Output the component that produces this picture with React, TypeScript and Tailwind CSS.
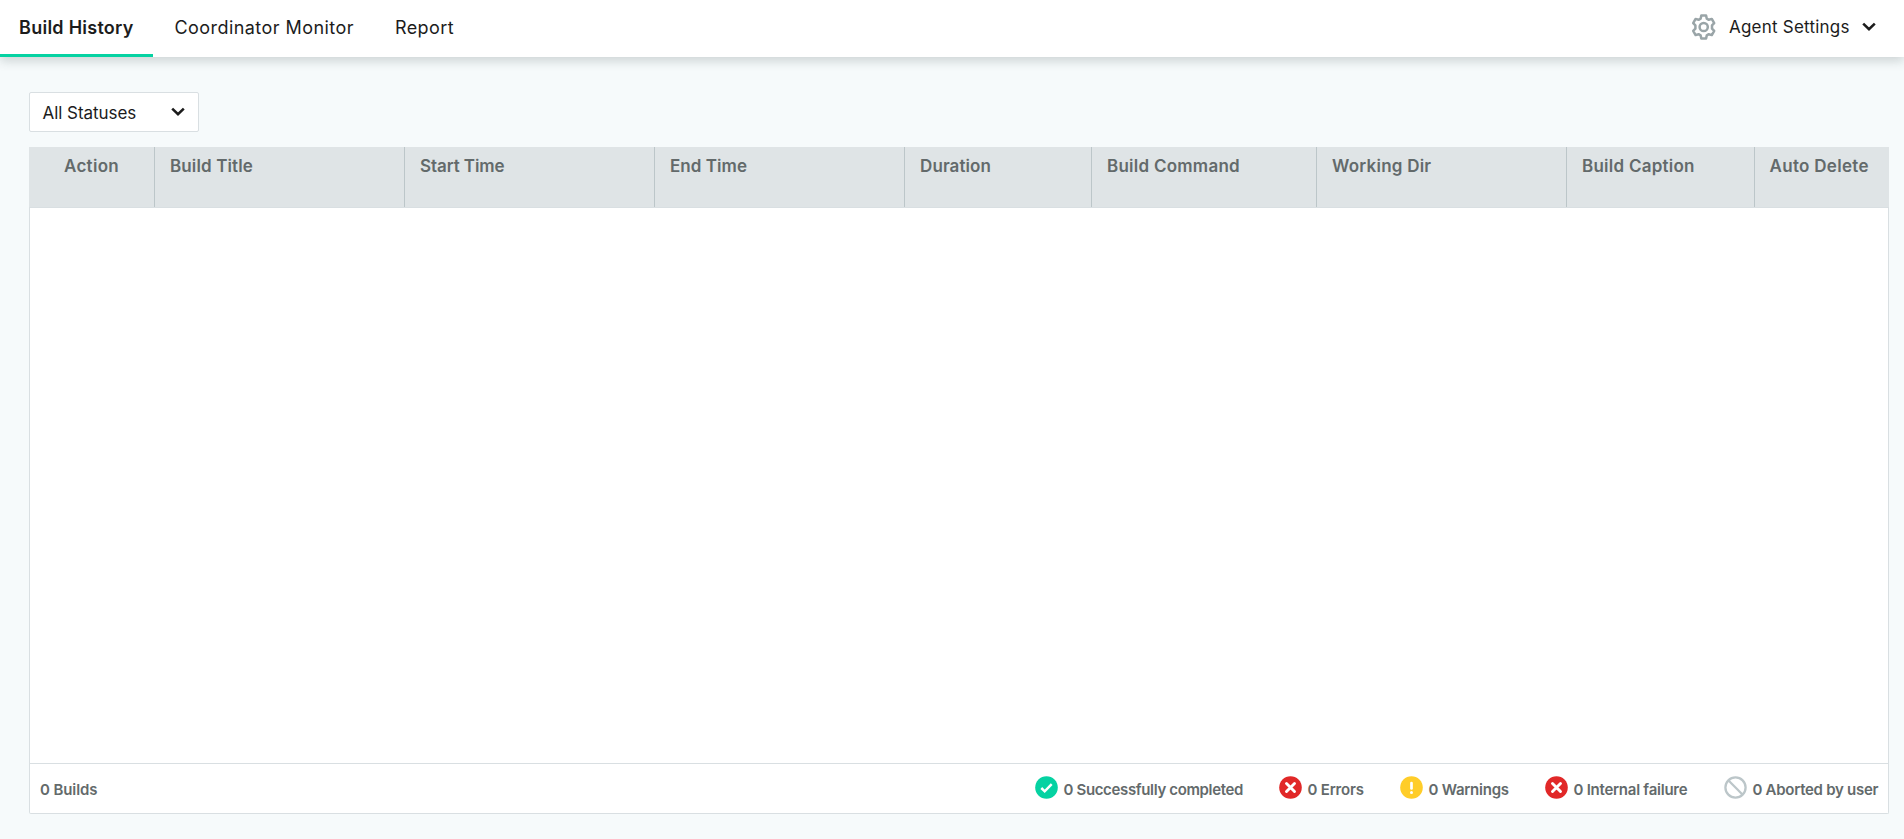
type Item = { label: string; cls: string };

const columns: Item[] = [
  { label: 'Action', cls: 'w-[126px] pl-[35px] tracking-[0.3px]' },
  { label: 'Build Title', cls: 'w-[250px] pl-[15px] tracking-[0.12px]' },
  { label: 'Start Time', cls: 'w-[250px] pl-[15px] tracking-[-0.08px]' },
  { label: 'End Time', cls: 'w-[250px] pl-[15px] tracking-[0.05px]' },
  { label: 'Duration', cls: 'w-[187px] pl-[15px] tracking-[0.1px]' },
  { label: 'Build Command', cls: 'w-[225px] pl-[15px] tracking-[0.25px]' },
  { label: 'Working Dir', cls: 'w-[250px] pl-[15px] tracking-[0.23px]' },
  { label: 'Build Caption', cls: 'w-[188px] pl-[15px] tracking-[0.25px]' },
  { label: 'Auto Delete', cls: 'grow pl-[14.5px] tracking-[0.3px]' },
];

function Chevron() {
  return (
    <svg width="14" height="10" viewBox="0 0 14 10" fill="none" stroke="#1c1c1c" strokeWidth="2.6">
      <path d="M1.2 1.6 7 7.1l5.800-5.500" />
    </svg>
  );
}

function Gear() {
  return (
    <svg width="26" height="26" viewBox="0 0 26 26" fill="none" stroke="#9aa5a8" strokeWidth="2.5" strokeLinejoin="round">
      <circle cx="12.7" cy="13" r="4.1" />
      <path d="M10.300 1.600h4.800l.700 3.100 2 1.100 3-.900 2.400 4.200-2.200 2.200v3.400l2.200 2.200-2.400 4.200-3-.900-2 1.100-.700 3.100h-4.800l-.700-3.100-2-1.100-3 .900-2.400-4.200 2.200-2.200v-3.400L2.200 9.100l2.400-4.200 3 .900 2-1.100z" />
    </svg>
  );
}

function StatusIcon({ kind }: { kind: string }) {
  return (
    <svg className="shrink-0" width="23" height="23" viewBox="0 0 23 23" fill="none">
      {kind === 'ok' && (
        <>
          <circle cx="11.5" cy="11.5" r="11.3" fill="#05d2a2" />
          <path d="m6.300 12 3.400 3.300 7-7.100" stroke="#fff" strokeWidth="2.5" />
        </>
      )}
      {kind === 'error' && (
        <>
          <circle cx="11.5" cy="11.5" r="11.3" fill="#e12828" />
          <path d="m7.500 7.500 8 8m0-8-8 8" stroke="#fff" strokeWidth="2.900" strokeLinecap="round" />
        </>
      )}
      {kind === 'warning' && (
        <>
          <circle cx="11.5" cy="11.5" r="11.3" fill="#ffcd29" />
          <path d="M11.500 7v5.500" stroke="#fff" strokeWidth="2.700" strokeLinecap="round" />
          <circle cx="11.5" cy="16.5" r="1.5" fill="#fff" />
        </>
      )}
      {kind === 'aborted' && (
        <g stroke="#bcc6c9" strokeWidth="2.300">
          <circle cx="11.5" cy="11.5" r="10.1" />
          <path d="m4.300 4.300 14.400 14.400" />
        </g>
      )}
    </svg>
  );
}

const statuses: (Item & { kind: string })[] = [
  { kind: 'ok', label: '0 Successfully completed', cls: 'w-[244px] tracking-[-0.35px]' },
  { kind: 'error', label: '0 Errors', cls: 'w-[121px] tracking-[-0.2px]' },
  { kind: 'warning', label: '0 Warnings', cls: 'w-[145px] tracking-[-0.25px]' },
  { kind: 'error', label: '0 Internal failure', cls: 'w-[179px] tracking-[-0.25px]' },
  { kind: 'aborted', label: '0 Aborted by user', cls: 'w-[164.5px] tracking-[-0.28px]' },
];

export default function App() {
  return (
    <div className="flex h-screen flex-col overflow-hidden bg-[#f6fafb] font-['Inter',sans-serif] text-[#1c1c1c]">
      <header className="flex h-[57px] shrink-0 justify-between bg-white shadow-[0_4px_10px_rgba(40,60,60,0.2)]">
        <nav className="flex text-[18px] leading-[56px]">
          <a className="h-[57px] w-[153px] border-b-[3px] border-[#05d2a2] pl-[19px] font-semibold tracking-[0.26px]">Build History</a>
          <a className="w-[221px] pl-[21.5px] tracking-[0.44px]">Coordinator Monitor</a>
          <a className="pl-[21px] tracking-[0.4px]">Report</a>
        </nav>
        <div className="flex h-[54px] w-[213px] items-center">
          <Gear />
          <span className="ml-3 w-[133px] pt-0.5 text-[17px] tracking-[0.22px]">Agent Settings</span>
          <Chevron />
        </div>
      </header>
      <main className="flex grow flex-col pt-[35px] pr-[15px] pb-[25px] pl-[29px]">
        <button className="flex h-10 w-[170px] items-center justify-between rounded-[2px] border border-[#d9dfe2] bg-white pr-[13px] pl-[12.5px] text-[17px] tracking-[-0.05px]">
          <span className="pt-[3px]">All Statuses</span>
          <Chevron />
        </button>
        <section className="mt-[15px] flex grow flex-col rounded-b-[2px] border border-t-0 border-[#d9dfe2] bg-white">
          <div className="-mx-px flex h-[61px] border-b border-[#d9dfe2] bg-[#dfe4e6] text-[17px] leading-[39px] font-semibold text-[#636a6b]">
            {columns.map((c) => (
              <div key={c.label} className={`shrink-0 border-r border-[#bcc6c9] last:border-r-0 ${c.cls}`}>
                {c.label}
              </div>
            ))}
          </div>
          <div className="grow" />
          <footer className="flex h-[50px] items-start justify-between border-t border-[#d9dfe2] pl-[10px] text-[15px] font-semibold text-[#636a6b]">
            <span className="mt-[15px] leading-[22px] tracking-[-0.1px]">0 Builds</span>
            <div className="flex">
              {statuses.map((s) => (
                <div key={s.label} className={`flex gap-1.5 pt-3 ${s.cls}`}>
                  <StatusIcon kind={s.kind} />
                  <span className="mt-[3px] leading-[22px] whitespace-nowrap">{s.label}</span>
                </div>
              ))}
            </div>
          </footer>
        </section>
      </main>
    </div>
  );
}
